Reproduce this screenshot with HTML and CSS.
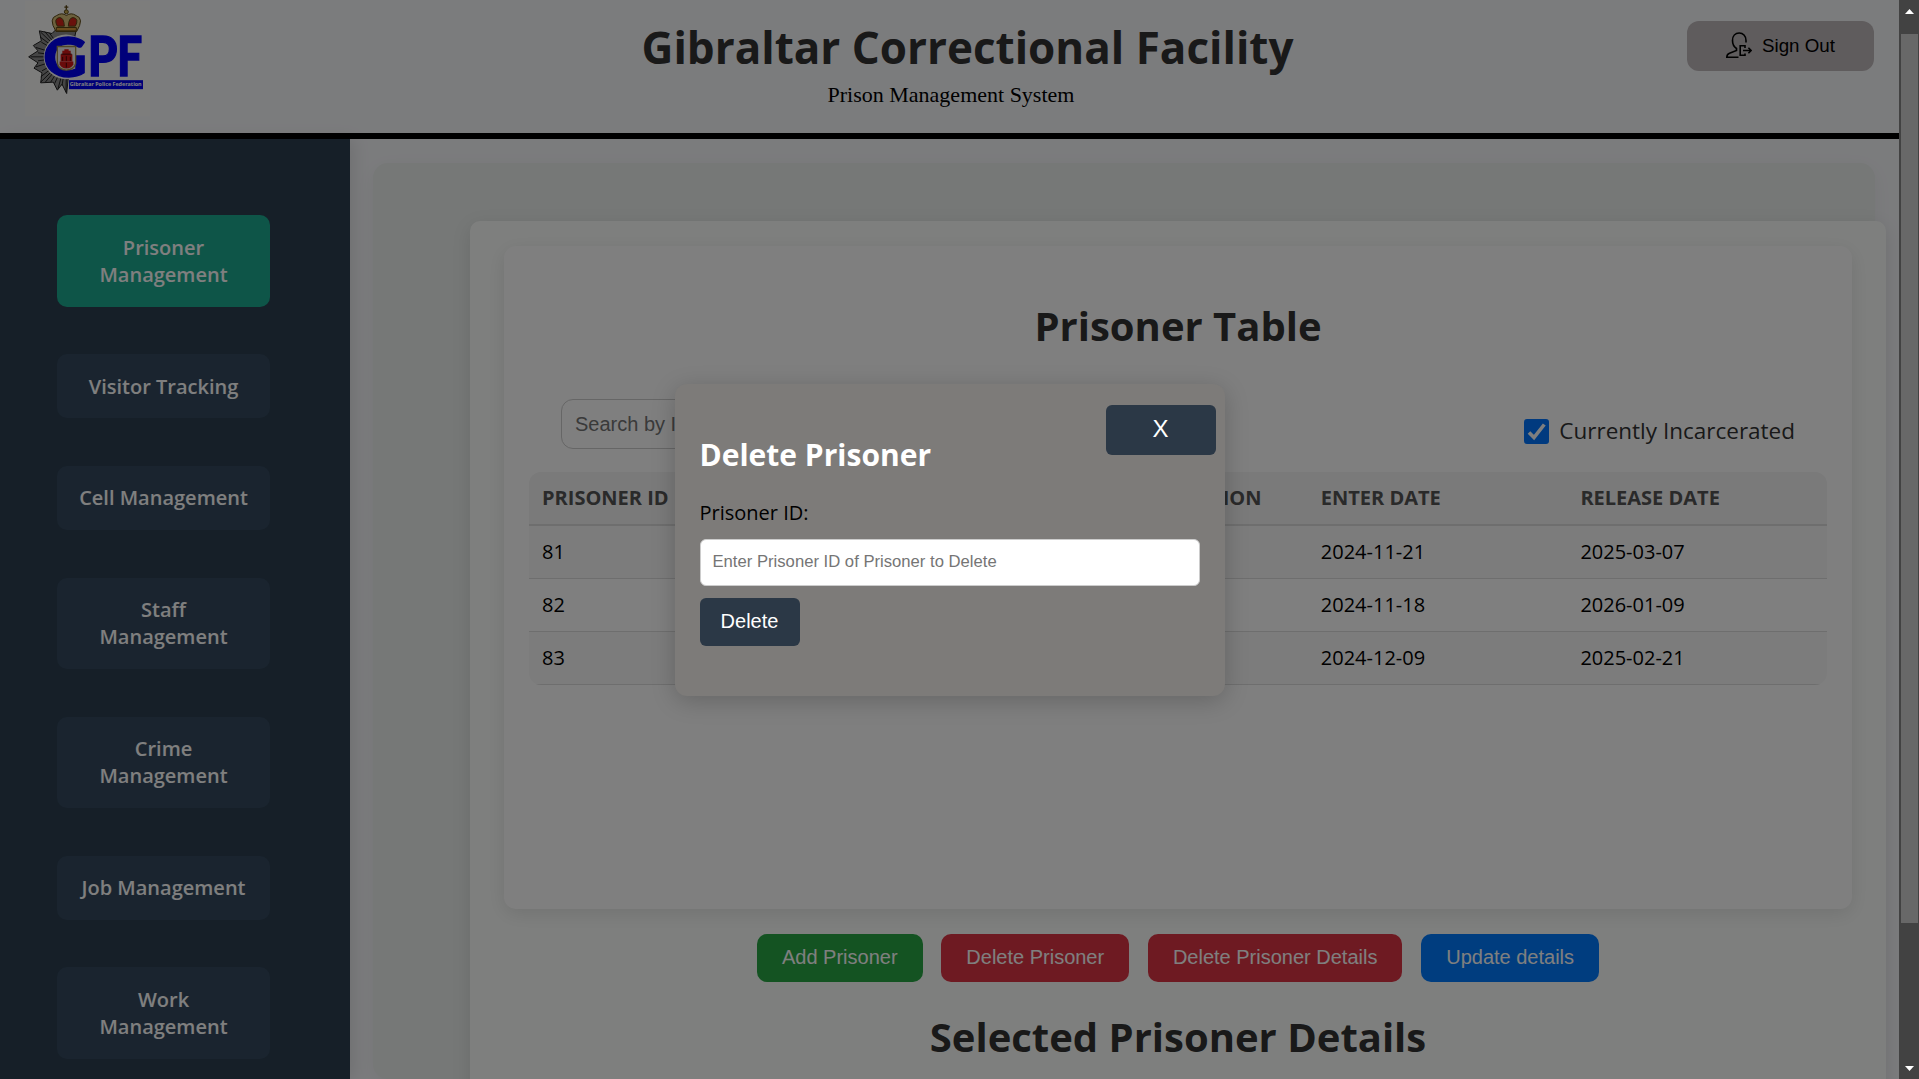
FILE: index.html
```html
<!DOCTYPE html>
<html lang="en">
<head>
<meta charset="utf-8">
<title>Gibraltar Correctional Facility</title>
<link rel="stylesheet" href="styles.css">
</head>
<body>
<div class="window">
  <div class="app">
    <header class="header">
      <svg class="logo" viewBox="15 0 375 350" role="img" aria-label="Gibraltar Police Federation">
        <rect x="15" width="375" height="350" fill="#fafaf9"/>
        <g stroke="#222" fill="#8b8b8b" stroke-width="3">
          <path d="M140 280 L126 252 L112 270 L100 246 L62 248 L66 218 L42 204 L54 188 L26 170 L54 152 L40 136 L64 122 L58 92 L96 100 L108 88 L168 92 L150 180 Z"/>
          <path fill="none" d="M140 170L62 96M140 170L74 94M140 170L88 98M140 170L60 110M140 170L64 126M140 170L48 142M140 170L54 158M140 170L32 170M140 170L54 182M140 170L48 200M140 170L66 212M140 170L62 230M140 170L62 246M140 170L76 246M140 170L92 246M140 170L104 250M140 170L114 266M140 170L126 256M140 170L138 276"/>
        </g>
        <circle cx="138" cy="170" r="67" fill="#fafaf9"/>
        <g class="logo-letters">
          <text x="70" y="231" font-size="168" textLength="131" lengthAdjust="spacingAndGlyphs">G</text>
          <text x="203" y="229" font-size="166" textLength="89" lengthAdjust="spacingAndGlyphs">P</text>
          <text x="291" y="229" font-size="166" textLength="76" lengthAdjust="spacingAndGlyphs">F</text>
        </g>
        <path d="M112 139H167V190Q163 208 139 210Q116 208 112 190Z" fill="#eee" stroke="#a08f50" stroke-width="4"/>
        <path d="M119 184H160V192Q156 204 139 205Q123 204 119 192Z" fill="#d31616"/>
        <path d="M122 184V162H127V152H133V147H146V152H152V162H157V184Z" fill="#d31616"/>
        <path d="M128 182V170M139 182V168M151 182V170M124 162H155M139 188V202" stroke="#4a0808" stroke-width="3"/>
        <g stroke="#5b4716" stroke-width="3">
          <path d="M108 94Q84 54 110 46Q126 36 139 46Q154 36 168 46Q194 54 170 94Z" fill="#d8c17a"/>
          <path d="M112 78Q100 56 118 52Q132 52 133 78ZM166 78Q178 56 160 52Q146 52 145 78Z" fill="#d22418"/>
          <path d="M109 82H169V92H109Z" fill="#d99a3c"/>
          <circle cx="139" cy="35" r="6" fill="#c5a94a"/>
          <path d="M139 15V29M133 21H145" fill="none" stroke-width="4"/>
        </g>
        <rect x="147" y="240" width="222" height="27" fill="#0000f0"/>
        <text class="logo-caption" x="149" y="259" font-size="17" textLength="216" lengthAdjust="spacingAndGlyphs">Gibraltar Police Federation</text>
      </svg>
      <div class="brand">
        <h1 class="brand-title">Gibraltar Correctional Facility</h1>
        <p class="brand-subtitle">Prison Management System</p>
      </div>
      <button class="sign-out">
        <svg class="sign-out-icon" viewBox="0 0 26 26" fill="none" stroke="#000" stroke-width="1.6">
          <path d="M20 10.5V8.5C20 3.8 17 1 13.2 1S6.500 3.800 6.500 8.500C6.500 12 8 14.800 10.500 16.500V18.500L3.500 21.200Q.8 22.300.8 25.200H12.500"/>
          <path d="M19 16V13.800H14.200V23.300H19V21.500M17 18.500H25M22.400 15.700L25.200 18.500L22.400 21.300"/>
        </svg>
        Sign Out
      </button>
    </header>
    <div class="body">
      <nav class="sidebar">
        <a class="nav-item nav-item-active">Prisoner Management</a>
        <a class="nav-item">Visitor Tracking</a>
        <a class="nav-item">Cell Management</a>
        <a class="nav-item">Staff Management</a>
        <a class="nav-item">Crime Management</a>
        <a class="nav-item">Job Management</a>
        <a class="nav-item">Work Management</a>
      </nav>
      <main class="panel">
        <section class="card">
          <div class="table-card">
            <h2 class="heading">Prisoner Table</h2>
            <div class="filters">
              <input class="search" type="text" placeholder="Search by ID or Name">
              <label class="toggle">
                <svg class="toggle-box" viewBox="0 0 25 25"><rect width="25" height="25" rx="3" fill="#0075ff"/><path d="M5 13.500L10 18.500L20.300 5.500" fill="none" stroke="#fff" stroke-width="3.600"/></svg>
                Currently Incarcerated
              </label>
            </div>
            <table class="table">
              <thead>
                <tr><th>Prisoner ID</th><th>Name</th><th>Crime Description</th><th>Enter Date</th><th>Release Date</th></tr>
              </thead>
              <tbody>
                <tr><td>81</td><td></td><td></td><td>2024-11-21</td><td>2025-03-07</td></tr>
                <tr><td>82</td><td></td><td></td><td>2024-11-18</td><td>2026-01-09</td></tr>
                <tr><td>83</td><td></td><td></td><td>2024-12-09</td><td>2025-02-21</td></tr>
              </tbody>
            </table>
          </div>
          <div class="actions">
            <button class="action action-add">Add Prisoner</button>
            <button class="action action-delete">Delete Prisoner</button>
            <button class="action action-delete">Delete Prisoner Details</button>
            <button class="action action-update">Update details</button>
          </div>
          <h2 class="heading">Selected Prisoner Details</h2>
        </section>
      </main>
    </div>
    <div class="overlay">
      <div class="modal">
        <button class="modal-close">X</button>
        <h3 class="modal-title">Delete Prisoner</h3>
        <label class="modal-label">Prisoner ID:</label>
        <input class="modal-input" type="text" placeholder="Enter Prisoner ID of Prisoner to Delete">
        <button class="modal-submit">Delete</button>
      </div>
    </div>
  </div>
  <div class="scrollbar">
    <svg class="arrow" viewBox="0 0 9 5"><path d="M0 5L4.500 0L9 5Z"/></svg>
    <div class="thumb"></div>
    <svg class="arrow" viewBox="0 0 9 5"><path d="M0 0L4.500 5L9 0Z"/></svg>
  </div>
</div>
</body>
</html>
```
FILE: styles.css
```css
* { box-sizing: border-box; }

body {
  margin: 0;
  overflow: hidden;
  font-family: "Open Sans", "Noto Sans", sans-serif;
  background: #f7f8fb;
}

button, input { font-family: "Liberation Sans", Arial, sans-serif; }

.window { display: flex; height: 1079px; overflow: hidden; }

.app {
  position: relative;
  display: flex;
  flex-direction: column;
  width: 1899px;
  overflow: hidden;
}

/* header */
.header {
  display: flex;
  align-items: flex-start;
  justify-content: space-between;
  height: 139px;
  flex: none;
  padding: 0 25px;
  border-bottom: 6px solid #000;
}

.logo { width: 125px; height: 117px; }

.logo-letters {
  font-family: Lato, sans-serif;
  font-weight: 900;
  fill: #0000f5;
  stroke: #0000f5;
  stroke-width: 4px;
}

.logo-caption {
  font-family: "Open Sans", sans-serif;
  font-weight: 700;
  fill: #fff;
}

.brand {
  display: flex;
  flex-direction: column;
  padding: 17px 0 0 98px;
}

.brand-title {
  margin: 0;
  font-size: 44px;
  line-height: 60px;
  color: #333;
}

.brand-subtitle {
  margin: 5px 0 0;
  padding-right: 33px;
  text-align: center;
  font-family: "Liberation Serif", "Times New Roman", serif;
  font-size: 22px;
  line-height: 26px;
}

.sign-out {
  display: flex;
  align-items: center;
  justify-content: center;
  gap: 10px;
  width: 187px;
  height: 50px;
  margin-top: 21px;
  border: 0;
  border-radius: 12px;
  background: #beb8ba;
  font-size: 18.750px;
  color: #000;
  padding: 0;
}

.sign-out-icon { width: 26px; height: 26px; margin-top: -2px; }

/* sidebar */
.body { display: flex; flex: 1; min-height: 0; }

.sidebar {
  display: flex;
  flex-direction: column;
  flex: none;
  gap: 47.500px;
  width: 350px;
  padding: 76px 80px 0 57px;
  background: #2c3e50;
  box-shadow: 4px 0 16px rgba(0, 0, 0, 0.1);
}

.nav-item {
  flex: none;
  padding: 18.500px 20px;
  border-radius: 10px;
  background: #34495e;
  font-size: 20px;
  font-weight: 600;
  line-height: 27.250px;
  text-align: center;
  color: #fff;
}

.nav-item-active { background: #1caa90; }

/* content */
.panel {
  flex: 1;
  margin: 24px 24px 0 23px;
  padding: 58px 0 0 97px;
  border-radius: 15px;
  background: #ecf0ee;
  box-shadow: 0 5px 19px rgba(0, 0, 0, 0.05);
}

.card {
  height: 1000px;
  margin-right: -11px;
  padding: 25px 34px;
  border-radius: 10px;
  background: #fdfffd;
  box-shadow: 0 5px 19px rgba(0, 0, 0, 0.1);
}

.heading {
  margin: 0;
  font-size: 40px;
  line-height: 54px;
  text-align: center;
  color: #333;
}

.table-card {
  height: 663px;
  padding: 53px 25px 0;
  border-radius: 12px;
  background: #fff;
  box-shadow: 0 5px 19px rgba(0, 0, 0, 0.1);
}

.filters {
  display: flex;
  align-items: flex-start;
  justify-content: space-between;
  margin: 46px 32px 23px;
}

.search {
  width: 375px;
  height: 50px;
  padding: 0 13px;
  border: 1px solid #ccc;
  border-radius: 12px;
  font-size: 20px;
}

.toggle {
  display: flex;
  align-items: center;
  gap: 10.500px;
  margin-top: 16px;
  font-size: 22.500px;
  line-height: 32px;
  color: #333;
}

.toggle-box { width: 25px; height: 25px; }

.table {
  width: 100%;
  table-layout: fixed;
  border-collapse: separate;
  border-spacing: 0;
  border-radius: 12px;
  overflow: hidden;
  font-size: 20px;
  line-height: 27px;
}

.table th {
  height: 54px;
  padding: 0 12.500px 2px 13px;
  border-bottom: 2px solid #ddd;
  background: #f4f4f4;
  text-align: left;
  text-transform: uppercase;
  white-space: nowrap;
  color: #555;
}

.table td {
  height: 53px;
  padding: 0 13px 2px;
  border-bottom: 1px solid #ddd;
}

.table tbody tr:nth-child(odd) { background: #f9f9f9; }

.actions {
  display: flex;
  justify-content: center;
  gap: 18.750px;
  margin: 25px 0 28px;
}

.action {
  height: 48px;
  padding: 0 25px 2px;
  border: 0;
  border-radius: 10px;
  font-size: 20px;
  color: #fff;
}

.action-add { background: #28a745; }
.action-delete { background: #dc3545; }
.action-update { background: #007bff; }

/* dialog */
.overlay {
  position: absolute;
  inset: 0;
  display: flex;
  align-items: center;
  justify-content: center;
  background: rgba(0, 0, 0, 0.5);
}

.modal {
  display: flex;
  flex-direction: column;
  align-items: flex-start;
  width: 550px;
  height: 312px;
  padding: 21px 25px 0;
  border-radius: 12px;
  background: #7d7b79;
  box-shadow: 0 5px 25px rgba(0, 0, 0, 0.2);
}

.modal-close {
  align-self: flex-end;
  width: 110px;
  height: 50px;
  margin-right: -16px;
  padding: 0 0 1px;
  border: 0;
  border-radius: 6px;
  background: #2b3846;
  font-size: 24px;
  color: #fff;
}

.modal-title {
  margin: -21px 0 0;
  font-size: 30px;
  line-height: 41px;
  color: #fff;
}

.modal-label {
  margin: 24px 0 13px;
  font-size: 20px;
  line-height: 27px;
}

.modal-input {
  width: 500px;
  height: 47px;
  padding: 0 12px;
  border: 1px solid #ccc;
  border-radius: 6px;
  font-size: 16.670px;
}

.modal-submit {
  width: 100px;
  height: 48px;
  margin-top: 12px;
  padding: 0;
  border: 0;
  border-radius: 6px;
  background: #2b3846;
  font-size: 20px;
  color: #fff;
}

/* scrollbar */
.scrollbar {
  display: flex;
  flex-direction: column;
  align-items: center;
  justify-content: space-between;
  width: 20px;
  padding: 9px 1px 8px 2px;
  background: #424242;
}

.arrow { width: 9px; height: 5px; fill: #fff; }

.thumb {
  width: 17px;
  height: 889px;
  margin-bottom: 123px;
  background: #686868;
}
```
